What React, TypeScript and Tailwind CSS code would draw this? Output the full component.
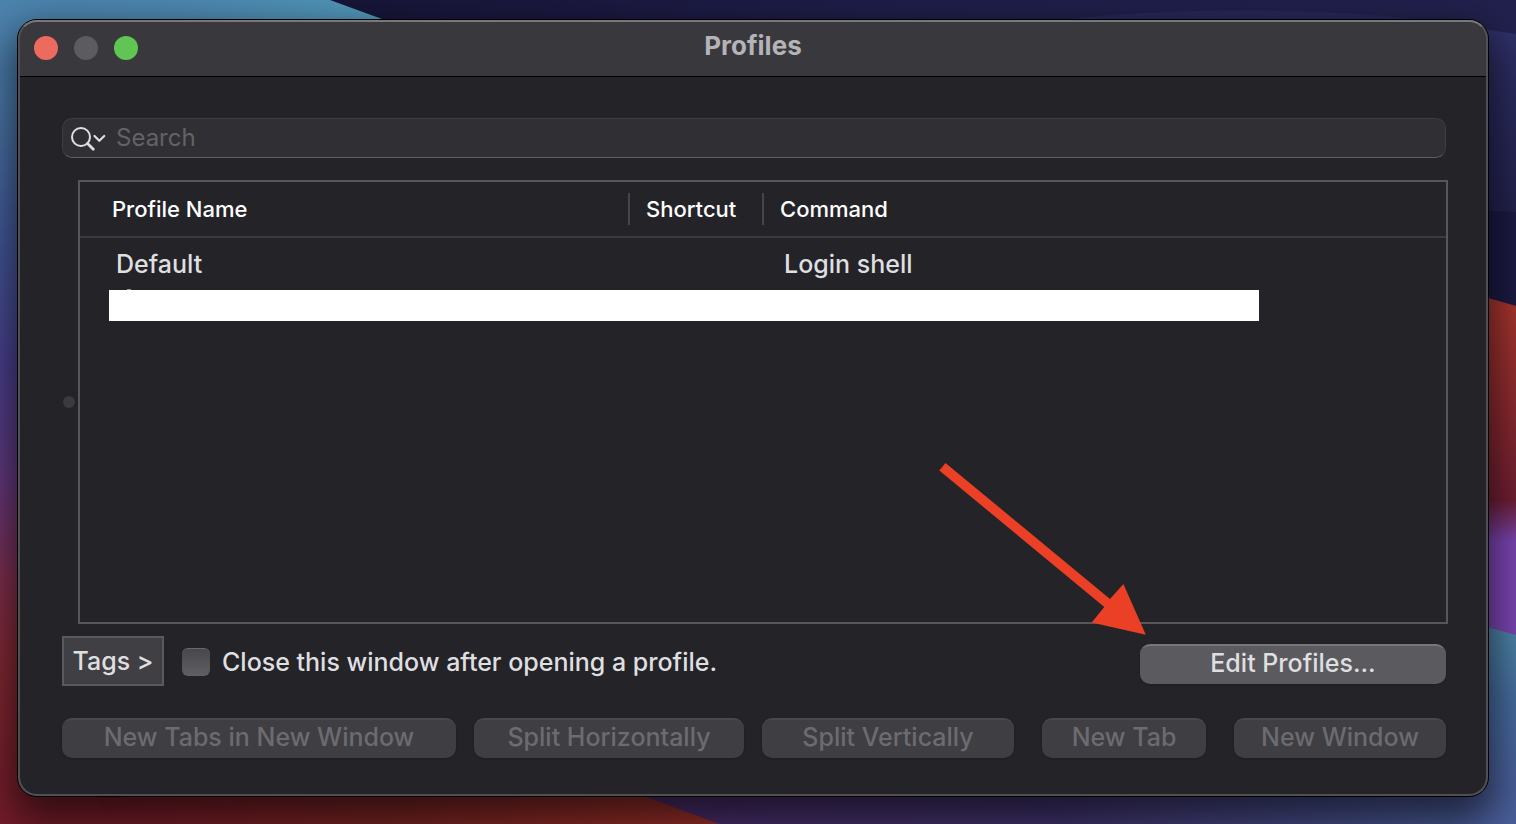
import React, { useState } from "react";

interface Profile {
  name: string;
  shortcut: string;
  command: string;
}

const profiles: Profile[] = [{ name: "Default", shortcut: "", command: "Login shell" }];

const actions = [
  { label: "New Tabs in New Window", className: "w-[394px]" },
  { label: "Split Horizontally", className: "ml-[18px] w-[270px]" },
  { label: "Split Vertically", className: "ml-[18px] w-[252px]" },
  { label: "New Tab", className: "ml-auto w-[164px]" },
  { label: "New Window", className: "ml-7 w-[212px]" },
];

const Wallpaper = () => (
  <svg
    className="absolute inset-0 h-full w-full"
    viewBox="0 0 1516 824"
    preserveAspectRatio="none"
    aria-hidden="true"
  >
    <defs>
      <linearGradient id="left" x1="0" y1="0" x2="0" y2="1">
        <stop offset="0" stopColor="#4c84ae" />
        <stop offset="0.12" stopColor="#4c7cac" />
        <stop offset="0.3" stopColor="#44589a" />
        <stop offset="0.45" stopColor="#4c4090" />
        <stop offset="0.58" stopColor="#643a80" />
        <stop offset="0.7" stopColor="#803050" />
        <stop offset="0.8" stopColor="#842a34" />
        <stop offset="1" stopColor="#761c2a" />
      </linearGradient>
      <linearGradient id="sky" x1="0" y1="0" x2="1" y2="0">
        <stop offset="0" stopColor="#4c84ae" stopOpacity="0" />
        <stop offset="1" stopColor="#529dbd" />
      </linearGradient>
      <linearGradient id="night" x1="0" y1="0" x2="1" y2="0">
        <stop offset="0" stopColor="#171538" />
        <stop offset="0.5" stopColor="#1f1e4a" />
        <stop offset="1" stopColor="#22214e" />
      </linearGradient>
      <linearGradient id="nightfall" x1="0" y1="0" x2="0" y2="1">
        <stop offset="0" stopColor="#30316a" />
        <stop offset="1" stopColor="#23224e" />
      </linearGradient>
      <linearGradient id="red" x1="0" y1="0" x2="0" y2="1">
        <stop offset="0" stopColor="#b0382e" />
        <stop offset="0.5" stopColor="#8c2a30" />
        <stop offset="0.84" stopColor="#701f34" />
        <stop offset="1" stopColor="#7c46b4" />
      </linearGradient>
      <linearGradient id="teal" x1="0" y1="0" x2="0" y2="1">
        <stop offset="0" stopColor="#4f8cac" />
        <stop offset="0.5" stopColor="#466da0" />
        <stop offset="1" stopColor="#4a609c" />
      </linearGradient>
      <linearGradient id="ember" x1="0" y1="0" x2="1" y2="0">
        <stop offset="0" stopColor="#761c2a" />
        <stop offset="0.5" stopColor="#7c2524" />
        <stop offset="1" stopColor="#9c302a" />
      </linearGradient>
      <linearGradient id="dusk" x1="0" y1="0" x2="1" y2="0">
        <stop offset="0" stopColor="#4c2c6c" />
        <stop offset="0.5" stopColor="#423470" />
        <stop offset="1" stopColor="#4a609c" />
      </linearGradient>
    </defs>
    <rect width="1516" height="824" fill="url(#left)" />
    <rect x="40" width="360" height="60" fill="url(#sky)" />
    <path d="M330 0 H1516 V320 H700 L382 19Z" fill="url(#night)" />
    <path d="M1060 20 C1180 6 1340 8 1440 22Z" fill="#27275a" />
    <path d="M1440 22 L1516 34 V212 L1440 209Z" fill="url(#nightfall)" />
    <path d="M1440 209 L1516 212 V310 H1440Z" fill="#1c1a44" />
    <path d="M1440 540 H1516 V640 H1440Z" fill="#7c46b4" />
    <path d="M1440 284 L1516 306 V541 H1440Z" fill="url(#red)" />
    <path d="M100 780 H600 L720 824 H100Z" fill="url(#ember)" />
    <path d="M600 780 H1516 V824 H720Z" fill="url(#dusk)" />
    <path d="M1440 614 L1516 635 V784 H1440Z" fill="url(#teal)" />
  </svg>
);

const SearchIcon = () => (
  <svg
    width="36"
    height="28"
    viewBox="0 0 36 28"
    fill="none"
    stroke="#dfdfe0"
    strokeLinecap="round"
    aria-hidden="true"
  >
    <circle cx="11" cy="13" r="9" strokeWidth="2" />
    <path d="M17.5 19.5 L23.3 25.3" strokeWidth="2.8" />
    <path d="M24.5 12 L29.3 16.8 L34.2 12" strokeWidth="2.2" strokeLinejoin="round" />
  </svg>
);

const App = () => {
  const [search, setSearch] = useState("");
  const [closeAfter, setCloseAfter] = useState(false);

  return (
    <div className="relative flex min-h-screen overflow-hidden pt-[19px] pr-[27px] pb-[27px] pl-[17px] font-['Inter',sans-serif] text-[25px] leading-8 font-medium text-[#dfdfe0]">
      <Wallpaper />
      <main className="relative flex grow flex-col rounded-[20px] border border-black bg-[#242328] shadow-[0_18px_40px_6px_rgba(0,0,0,0.6)]">
        {/* light rim of the window */}
        <div className="pointer-events-none absolute inset-0 z-10 rounded-[19px] border-2 border-[#505053] border-t-[#78787b]" />

        <header className="relative flex h-[57px] shrink-0 items-center justify-center rounded-t-[19px] border-b border-black bg-[#39383c]">
          <div className="absolute left-4 flex gap-4">
            <button aria-label="Close" className="size-6 rounded-full bg-[#ed6a5e]" />
            <button aria-label="Minimize" disabled className="size-6 rounded-full bg-[#5c5b60]" />
            <button aria-label="Zoom" className="size-6 rounded-full bg-[#61c554]" />
          </div>
          <h1 className="pb-1 text-[26px] font-bold text-[#b4b3b7]">Profiles</h1>
        </header>

        <div className="flex grow flex-col pt-[41px] pr-[42px] pb-[38px] pl-11">
          <label className="flex h-10 shrink-0 items-center rounded-[10px] border border-[#3e3d42] border-b-[#5e5d61] bg-[#302f34] pl-[7px]">
            <SearchIcon />
            <input
              type="text"
              aria-label="Search"
              placeholder="Search"
              value={search}
              onChange={(e) => setSearch(e.target.value)}
              className="ml-2.5 grow bg-transparent text-[24px] font-normal outline-none placeholder:text-[#636267]"
            />
          </label>

          <div className="mt-[22px] -mr-0.5 flex grow items-center gap-[3px]">
            {/* split view handle */}
            <div className="ml-px size-3 shrink-0 rounded-full bg-[#3b3a3f]" />
            <div className="grow self-stretch border-2 border-[#57575a]">
              <table className="w-full table-fixed text-left">
                <thead>
                  <tr className="h-[55px] border-b-2 border-[#3c3b40] text-[22px] leading-8 text-white">
                    <th className="w-[548px] p-0 pl-8 font-medium">Profile Name</th>
                    <th className="w-[134px] p-0 font-medium">
                      <div className="border-l-2 border-[#46454a] pl-4">Shortcut</div>
                    </th>
                    <th className="p-0 font-medium">
                      <div className="border-l-2 border-[#46454a] pl-4">Command</div>
                    </th>
                  </tr>
                </thead>
                <tbody>
                  {profiles.map((profile) => (
                    <tr key={profile.name} className="h-[53px]">
                      <td className="p-0 pl-9">{profile.name}</td>
                      <td className="p-0">{profile.shortcut}</td>
                      <td className="p-0 pl-[22px]">{profile.command}</td>
                    </tr>
                  ))}
                </tbody>
              </table>
              {/* hidden profile, the top of its name peeks out */}
              <div className="relative mr-[187px] ml-[29px] h-[31px] bg-white">
                <div className="absolute -top-px left-[18px] h-px w-1 bg-[#9a9a9c]" />
              </div>
            </div>
          </div>

          <div className="mt-3 flex h-[50px] shrink-0 items-center">
            <button className="h-full w-[102px] border-2 border-[#5a595e] bg-[#403f44]">Tags &gt;</button>
            <label className="ml-[18px] flex items-center gap-3 pt-0.5">
              <input
                type="checkbox"
                checked={closeAfter}
                onChange={(e) => setCloseAfter(e.target.checked)}
                className="size-7 appearance-none rounded-md border-t border-[#6a696e] bg-linear-to-b from-[#48474c] to-[#605f64] checked:bg-blue-500"
              />
              Close this window after opening a profile.
            </label>
            <button className="mt-1.5 ml-auto h-10 w-[306px] rounded-[10px] border-t-2 border-[#78777c] bg-[#5b5a5f] pb-1 shadow-sm">
              Edit Profiles...
            </button>
          </div>

          <div className="mt-8 flex shrink-0">
            {actions.map((action) => (
              <button
                key={action.label}
                disabled
                className={`h-10 rounded-[10px] border-t-2 border-[#49484d] bg-[#3f3e43] pb-1 text-[#6c6b70] shadow-sm ${action.className}`}
              >
                {action.label}
              </button>
            ))}
          </div>
        </div>
      </main>

      {/* arrow pointing at the edit button */}
      <svg
        className="pointer-events-none absolute right-[370px] bottom-[189px] z-20"
        width="208"
        height="173"
        viewBox="0 0 208 173"
        fill="#eb4026"
        aria-hidden="true"
      >
        <path d="M7.5 1 L172 137 L185.4 122 L207.8 172.8 L153.7 160.6 L166.3 145 L1.3 8.5Z" />
      </svg>
    </div>
  );
};

export default App;
